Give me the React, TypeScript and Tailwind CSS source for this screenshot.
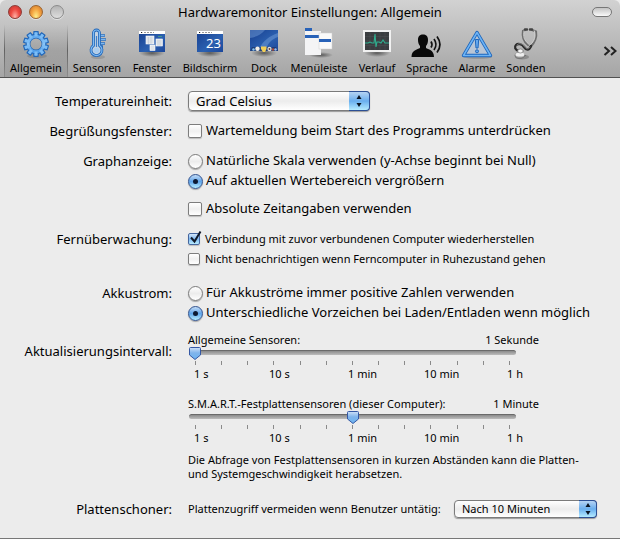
import { useId, useState, type ReactNode } from "react";

function GearIcon() {
  const teeth = Array.from({ length: 10 }, (_, i) => i * 36);
  return (
    <svg viewBox="0 0 32 32" className="size-8">
      <defs>
        <linearGradient id="gear" x1="0" y1="0" x2="0" y2="1">
          <stop offset="0" stopColor="#5aa5ee" />
          <stop offset="0.5" stopColor="#8cc6f8" />
          <stop offset="1" stopColor="#4a9bea" />
        </linearGradient>
      </defs>
      <ellipse cx="17" cy="28" rx="10" ry="2.5" fill="#000" opacity="0.12" />
      <g stroke="#2468b8" strokeWidth="1.2" fill="#6db2f2">
        {teeth.map((a) => (
          <path key={a} d="M13.400 8 L14 3.600 H18 L18.600 8 Z" transform={`rotate(${a} 16 16)`} />
        ))}
      </g>
      <circle cx="16" cy="16" r="7.8" fill="none" stroke="#2468b8" strokeWidth="4.4" />
      <circle cx="16" cy="16" r="7.8" fill="none" stroke="url(#gear)" strokeWidth="3" />
      <g fill="#7dbdf6">
        {teeth.map((a) => (
          <path key={a} d="M14.300 8.500 L14.800 4.400 H17.200 L17.700 8.500 Z" transform={`rotate(${a} 16 16)`} />
        ))}
      </g>
    </svg>
  );
}

function ThermometerIcon() {
  return (
    <svg viewBox="0 0 32 32" className="size-8">
      <ellipse cx="17" cy="29" rx="7" ry="2" fill="#000" opacity="0.12" />
      <path d="M19 7.500h5M19 11.500h6M19 15.500h5M19 18.500h3" stroke="#2a70c0" strokeWidth="2.400" />
      <path d="M19 7.500h4.500M19 11.500h5.500M19 15.500h4.500" stroke="#7db9f3" strokeWidth="1" />
      <path d="M12.500 17.500V5a3 3 0 0 1 6 0v12.500a5.500 5.500 0 1 1-6 0Z" fill="#c5d3e2" stroke="#1f64b6" strokeWidth="2.800" />
      <path d="M12.500 17.500V5a3 3 0 0 1 6 0v12.500a5.500 5.500 0 1 1-6 0Z" fill="none" stroke="#7dbbf5" strokeWidth="1.200" />
      <path d="M15.500 8v11" stroke="#3b7fca" strokeWidth="1.200" />
      <circle cx="15.500" cy="22.300" r="2.800" fill="#a9cdf0" />
    </svg>
  );
}

function Desktop({ children }: { children: ReactNode }) {
  return (
    <svg viewBox="0 0 32 32" className="size-8">
      <defs>
        <linearGradient id="desk" x1="0" y1="0" x2="1" y2="1">
          <stop offset="0" stopColor="#173f8f" />
          <stop offset="0.6" stopColor="#2b60b0" />
          <stop offset="1" stopColor="#1c479b" />
        </linearGradient>
        <radialGradient id="shade">
          <stop offset="0" stopColor="#000" stopOpacity="0.5" />
          <stop offset="1" stopColor="#000" stopOpacity="0" />
        </radialGradient>
      </defs>
      <ellipse cx="16" cy="25" rx="13" ry="4" fill="url(#shade)" />
      {children}
    </svg>
  );
}

function MenuBar() {
  return (
    <>
      <rect x="3" y="3" width="26" height="21" fill="url(#desk)" />
      <rect x="3" y="3" width="26" height="3" fill="#fff" />
      <path d="M5 4.500h1.200" stroke="#222" strokeWidth="1.200" />
      <path d="M8 4.500h10" stroke="#999" strokeDasharray="2 1" />
    </>
  );
}

function WindowsIcon() {
  return (
    <Desktop>
      <MenuBar />
      <g fill="#dfe4ea" stroke="#fff" strokeWidth="0.600">
        <rect x="10" y="8" width="8" height="8" />
        <rect x="20" y="11" width="6.500" height="7" />
        <rect x="14" y="17" width="5" height="5.500" />
      </g>
      <path d="M12.500 9v7M15 9v7M22 12v6M24 12v6" stroke="#c2c9d2" strokeWidth="0.600" />
      <path d="M22 8.500h4" stroke="#4cab7c" strokeWidth="0.800" />
    </Desktop>
  );
}

function ScreenIcon() {
  return (
    <Desktop>
      <MenuBar />
      <text x="12" y="20" fontSize="13" fill="#fff" className="font-['Noto_Sans',sans-serif]">23</text>
    </Desktop>
  );
}

function DockIcon() {
  return (
    <Desktop>
      <rect x="2" y="2" width="28" height="21" fill="url(#desk)" />
      <path d="M2 2h15c-4 5-9 7-15 8ZM30 5c-9 3-15 8-19 16h7c2-6 6-10 12-12Z" fill="#7ba5dc" opacity="0.450" />
      <path d="M2 23l2-4h24l2 4Z" fill="#1b2f5c" opacity="0.600" />
      <circle cx="5.500" cy="21.500" r="1.200" fill="#87c5f2" />
      <circle cx="9.500" cy="20.800" r="2.200" fill="#f3efe6" />
      <path d="M13 18.500h5.500v2.500l-1.500 3h-2L13 21Z" fill="#f3cf56" />
      <circle cx="21.500" cy="21" r="2.200" fill="#dddbd8" />
      <circle cx="21.500" cy="21" r="0.900" fill="#6b4632" />
      <circle cx="25" cy="21.500" r="1.200" fill="#b04b36" />
      <circle cx="27.500" cy="21.500" r="1.200" fill="#9dbde8" />
    </Desktop>
  );
}

function MenusIcon() {
  return (
    <svg viewBox="0 0 32 32" className="size-8">
      <ellipse cx="18" cy="27" rx="12" ry="3" fill="url(#shade)" />
      <rect x="2" y="0" width="7" height="3" fill="#2862b8" />
      <rect x="2" y="3" width="16" height="24" fill="#f4f4f5" />
      <rect x="2" y="7" width="15" height="3" fill="#2862b8" />
      <rect x="16" y="5" width="13" height="16" fill="#fafafa" stroke="#cfcfcf" strokeWidth="0.500" />
      <rect x="16" y="11" width="12" height="3" fill="#2862b8" />
    </svg>
  );
}

function HistoryIcon() {
  return (
    <Desktop>
      <rect x="2" y="2" width="28" height="22" fill="#f1f1f1" />
      <rect x="4" y="4" width="24" height="18" fill="#3a3d40" />
      <path d="M4 8.500h24M4 13h24M4 17.500h24M9 4v18M14 4v18M19 4v18M24 4v18" stroke="#4c5053" strokeWidth="0.500" />
      <path d="M4 15h3l2-1 2 1h2l1-9 1 13 1-5h2l2 1 2-3 2 3h4" fill="none" stroke="#2fae8e" strokeWidth="1.100" />
    </Desktop>
  );
}

function SpeechIcon() {
  return (
    <svg viewBox="0 0 32 32" className="size-8">
      <path d="M7 12c0-4 2-5.500 5-5.500s5 1.500 5 5.500c0 3-1 5-2 6v2c2 1.500 8 1.500 8 9H0.500c0-7 6-7.500 8.500-9v-2c-1-1-2-3-2-6Z" fill="#090909" />
      <g fill="none" stroke="#111" strokeWidth="1.700">
        <path d="M20 13.500c1.300 2 1.300 4 0 6" />
        <path d="M23 11c2.500 3.500 2.500 7.500 0 11" />
        <path d="M26 8.500c3.700 5 3.700 11 0 16" />
      </g>
    </svg>
  );
}

function AlertIcon() {
  return (
    <svg viewBox="0 0 32 32" className="size-8">
      <ellipse cx="17" cy="29" rx="14" ry="2" fill="#000" opacity="0.120" />
      <path d="M16 4.500 29.500 27.500h-27Z" fill="#b9c6d6" stroke="#1e66bb" strokeWidth="3.400" strokeLinejoin="round" />
      <path d="M16 4.500 29.500 27.500h-27Z" fill="none" stroke="#6eb4f5" strokeWidth="1.500" strokeLinejoin="round" />
      <path d="M14.300 11.500h3.400L17 20h-2Z" fill="#66aaf0" stroke="#1e66bb" />
      <circle cx="16" cy="23.300" r="1.500" fill="#66aaf0" stroke="#1e66bb" />
    </svg>
  );
}

function StethoscopeIcon() {
  return (
    <svg viewBox="0 0 32 32" className="size-8" fill="none" strokeLinecap="round">
      <ellipse cx="12" cy="29" rx="7" ry="2.500" fill="#000" opacity="0.200" />
      <path d="M15 2l-2 1c-1 6 0 10 5 14M22 2l4 1.500c1 6-1 11-6 16" stroke="#6e6e6e" strokeWidth="2.200" />
      <path d="M14 3c-1 6 0 9 4.500 13M24.500 3c1.500 6 0 10-4.500 14" stroke="#d8d8d8" strokeWidth="0.900" />
      <path d="M15 1.500h2M20 1.500h2" stroke="#444" strokeWidth="2.400" />
      <path d="M21 18c-2 5-5 4-7 1s-6-4-8-2-1 5 3 6" stroke="#2b2b2b" strokeWidth="2.400" />
      <path d="M20 19c-2 3-4 2-6-1s-6-3-7-1" stroke="#9a9a9a" strokeWidth="0.700" />
      <ellipse cx="10" cy="27.500" rx="5" ry="2.800" fill="#a5a5a5" stroke="#666" strokeWidth="0.800" />
      <ellipse cx="10" cy="26.500" rx="4.500" ry="2" fill="#eee" />
      <ellipse cx="10.500" cy="23" rx="2.800" ry="2" fill="#f5f5f5" stroke="#777" strokeWidth="0.700" />
    </svg>
  );
}

const tabs = [
  { name: "Allgemein", width: "w-16", icon: <GearIcon /> },
  { name: "Sensoren", width: "w-[58px]", icon: <ThermometerIcon /> },
  { name: "Fenster", width: "w-[52px]", icon: <WindowsIcon /> },
  { name: "Bildschirm", width: "w-16", icon: <ScreenIcon /> },
  { name: "Dock", width: "w-11", icon: <DockIcon /> },
  { name: "Menüleiste", width: "w-[66px]", icon: <MenusIcon /> },
  { name: "Verlauf", width: "w-[50px]", icon: <HistoryIcon /> },
  { name: "Sprache", width: "w-[50px]", icon: <SpeechIcon /> },
  { name: "Alarme", width: "w-[50px]", icon: <AlertIcon /> },
  { name: "Sonden", width: "w-12", icon: <StethoscopeIcon /> },
];

function Header() {
  const [active, setActive] = useState("Allgemein");
  const light = "size-[14px] rounded-full border shadow-[0_1px_0_rgba(255,255,255,0.5)]";
  return (
    <header className="rounded-t-md border-b border-[#515151] bg-linear-to-b from-[#d2d2d2] to-[#a5a5a5]">
      <div className="grid h-6 grid-cols-[1fr_auto_1fr] items-center px-2">
        <div className="flex gap-[7px]">
          <button aria-label="Schließen" className={`${light} border-[#8d3b36] bg-radial-[at_50%_90%] from-[#ffb3a8] via-[#ee4a42] to-[#b8322c]`} />
          <button aria-label="Minimieren" className={`${light} border-[#9a6430] bg-radial-[at_50%_90%] from-[#fff08c] via-[#f5a742] to-[#c96f28]`} />
          <button aria-label="Zoomen" className={`${light} border-[#8b8b8b] bg-linear-to-b from-[#b4b4b4] to-[#dedede]`} />
        </div>
        <h1 className="text-[13px] leading-5">Hardwaremonitor Einstellungen: Allgemein</h1>
        <button
          aria-label="Symbolleiste ein- oder ausblenden"
          className="h-[10px] w-5 justify-self-end rounded-full border border-[#777] bg-linear-to-b from-[#c4c4c4] to-[#fafafa]"
        />
      </div>
      <nav className="flex h-[53px] items-stretch pr-[3px] pl-1">
        {tabs.map((tab) => (
          <button
            key={tab.name}
            onClick={() => setActive(tab.name)}
            className={`${tab.width} relative flex shrink-0 flex-col items-center pt-1 text-[11px] leading-4 ${
              active === tab.name ? "bg-linear-to-b from-transparent via-black/10 to-black/5" : ""
            }`}
          >
            {active === tab.name && (
              <>
                <span className="absolute inset-y-0 left-0 w-px bg-linear-to-b from-transparent via-black/40 to-black/10" />
                <span className="absolute inset-y-0 right-0 w-px bg-linear-to-b from-transparent via-black/40 to-black/10" />
              </>
            )}
            {tab.icon}
            <span>{tab.name}</span>
          </button>
        ))}
        <button aria-label="Weitere Symbole" className="ml-auto self-center">
          <svg viewBox="0 0 14 12" className="h-3 w-[14px]" fill="none" stroke="#222" strokeWidth="2">
            <path d="M1.500 2 6 6 1.500 10M8 2l4.500 4L8 10" />
          </svg>
        </button>
      </nav>
    </header>
  );
}

function Row({ label, children }: { label: string; children: ReactNode }) {
  return (
    <div role="group" aria-label={label} className="grid grid-cols-[172px_1fr] gap-x-4">
      <div className="text-right text-[13px] leading-5 whitespace-nowrap">{label}</div>
      <div className="min-w-0">{children}</div>
    </div>
  );
}

function Select({ options, small, label }: { options: string[]; small?: boolean; label: string }) {
  return (
    <span className={`relative flex ${small ? "h-[18px] w-[143px]" : "h-5 w-[182px]"}`}>
      <select
        aria-label={label}
        className={`w-full appearance-none rounded-[4px] border border-[#7b7b7b] bg-linear-to-b from-white via-[#ececec] to-white pl-[7px] shadow-[0_1px_1px_rgba(0,0,0,0.35)] ${
          small ? "text-[11px] leading-4" : "text-[13px] leading-[18px]"
        }`}
      >
        {options.map((o) => (
          <option key={o}>{o}</option>
        ))}
      </select>
      <span
        className={`pointer-events-none absolute inset-y-0 right-0 flex items-center justify-center rounded-r-[4px] border border-l-0 border-[#2c4f94] bg-linear-to-b from-[#b5d3f3] via-[#69aeee] to-[#b4ebff] ${
          small ? "w-[18px]" : "w-[21px]"
        }`}
      >
        <svg viewBox="0 0 6 14" className="h-[14px] w-[6px]" fill="#0a1422">
          <path d="M3 1 5.500 5h-5ZM3 13 .5 9h5Z" />
        </svg>
      </span>
    </span>
  );
}

function Checkbox({ children, checked, small }: { children: string; checked?: boolean; small?: boolean }) {
  return (
    <label className={`flex h-5 items-center whitespace-nowrap ${small ? "gap-[5px] text-[11px]" : "gap-1 text-[13px]"}`}>
      <span className={`relative flex ${small ? "size-3" : "size-[14px]"}`}>
        <input
          type="checkbox"
          defaultChecked={checked}
          className="peer size-full appearance-none rounded-[2px] border border-[#7d7d7d] bg-linear-to-b from-white via-[#f0f0f0] to-white shadow-[0_1px_1px_rgba(0,0,0,0.2)] checked:border-[#45669f] checked:from-[#d4e6f9] checked:via-[#7db8f0] checked:to-[#b9ecff]"
        />
        <svg viewBox="0 0 14 14" className="pointer-events-none absolute bottom-px left-px hidden size-[14px] peer-checked:block" fill="none" stroke="#101828" strokeWidth="2">
          <path d="M2 7.500 5.500 11.500 11.500 1.500" />
        </svg>
      </span>
      {children}
    </label>
  );
}

function Radio({ children, checked, name }: { children: string; checked?: boolean; name: string }) {
  return (
    <label className="flex h-5 items-center gap-[3px] text-[13px] whitespace-nowrap">
      <span className="relative flex size-[15px]">
        <input
          type="radio"
          name={name}
          defaultChecked={checked}
          className="peer size-full appearance-none rounded-full border border-[#7b7b7b] bg-linear-to-b from-white via-[#ececec] to-white shadow-[0_1px_1px_rgba(0,0,0,0.3)] checked:border-[#31528f] checked:from-[#c3dcf6] checked:via-[#5fa5ea] checked:to-[#b6edff]"
        />
        <span className="pointer-events-none absolute inset-0 m-auto hidden size-[5px] rounded-full bg-[#0d1a33] peer-checked:block" />
      </span>
      {children}
    </label>
  );
}

const steps = Array.from({ length: 13 }, (_, i) => i);

function Slider({ title, reading, initial }: { title: string; reading: string; initial: number }) {
  const [value, setValue] = useState(initial);
  const id = useId();
  return (
    <div className="text-[11px] leading-[14px]">
      <div className="flex w-[351px] justify-between">
        <label htmlFor={id}>{title}</label>
        <output htmlFor={id}>{reading}</output>
      </div>
      <div className="ml-px w-[327px]">
        <div className="relative flex h-[14px] items-start pt-[3px]">
          <input
            id={id}
            type="range"
            min={0}
            max={12}
            value={value}
            onChange={(e) => setValue(Number(e.target.value))}
            className="h-[5px] w-full appearance-none rounded-full border-t border-[#6a6a6a] bg-linear-to-b from-[#8b8b8b] to-[#bdbdbd] [&::-webkit-slider-thumb]:h-[14px] [&::-webkit-slider-thumb]:w-3 [&::-webkit-slider-thumb]:appearance-none"
          />
          <div className="pointer-events-none absolute inset-x-[6px] top-0">
            <svg
              viewBox="0 0 12 14"
              className="absolute top-0 h-[14px] w-3 -translate-x-1/2"
              style={{ left: `${(value / 12) * 100}%` }}
            >
              <defs>
                <linearGradient id="thumb" x1="0" y1="0" x2="0" y2="1">
                  <stop offset="0" stopColor="#cfe1f7" />
                  <stop offset="0.450" stopColor="#7fb4ec" />
                  <stop offset="1" stopColor="#6cb4f0" />
                </linearGradient>
              </defs>
              <path d="M1.500.5h9q1 0 1 1v6.500L6 12.500.5 8V1.500q0-1 1-1Z" fill="url(#thumb)" stroke="#3558a4" />
            </svg>
          </div>
        </div>
        <div className="flex justify-between px-[6px]">
          {steps.map((s) => (
            <span key={s} className="h-1 w-px bg-[#8a8a8a]" />
          ))}
        </div>
      </div>
      <div className="grid grid-cols-[75px_79px_76px_83px_auto] pt-[2px] pl-[6px]">
        <span>1 s</span>
        <span>10 s</span>
        <span>1 min</span>
        <span>10 min</span>
        <span>1 h</span>
      </div>
    </div>
  );
}

export default function App() {
  return (
    <div className="flex min-h-screen flex-col border-b border-[#777] bg-[#ececec] font-['Noto_Sans',sans-serif] text-black">
      <Header />
      <main className="flex flex-col gap-[10px] pt-[13px]">
        <Row label="Temperatureinheit:">
          <Select label="Temperatureinheit" options={["Grad Celsius", "Grad Fahrenheit", "Kelvin"]} />
        </Row>
        <Row label="Begrüßungsfenster:">
          <Checkbox>Wartemeldung beim Start des Programms unterdrücken</Checkbox>
        </Row>
        <Row label="Graphanzeige:">
          <Radio name="graph">Natürliche Skala verwenden (y-Achse beginnt bei Null)</Radio>
          <Radio name="graph" checked>Auf aktuellen Wertebereich vergrößern</Radio>
          <div className="pt-2">
            <Checkbox>Absolute Zeitangaben verwenden</Checkbox>
          </div>
        </Row>
        <Row label="Fernüberwachung:">
          <Checkbox small checked>Verbindung mit zuvor verbundenen Computer wiederherstellen</Checkbox>
          <Checkbox small>Nicht benachrichtigen wenn Ferncomputer in Ruhezustand gehen</Checkbox>
        </Row>
        <div className="pt-1">
          <Row label="Akkustrom:">
            <Radio name="current">Für Akkuströme immer positive Zahlen verwenden</Radio>
            <Radio name="current" checked>Unterschiedliche Vorzeichen bei Laden/Entladen wenn möglich</Radio>
          </Row>
        </div>
        <div className="grid grid-cols-[172px_1fr] gap-x-4">
          <div className="pt-2 text-right text-[13px] leading-5 whitespace-nowrap">Aktualisierungsintervall:</div>
          <div className="flex flex-col gap-4">
            <Slider title="Allgemeine Sensoren:" reading="1 Sekunde" initial={0} />
            <Slider title="S.M.A.R.T.-Festplattensensoren (dieser Computer):" reading="1 Minute" initial={6} />
          </div>
          <p className="col-start-2 max-w-[408px] pt-2 text-[11px] leading-[14px]">
            Die Abfrage von Festplattensensoren in kurzen Abständen kann die Platten- und Systemgeschwindigkeit herabsetzen.
          </p>
        </div>
        <div className="pt-2">
          <Row label="Plattenschoner:">
            <label className="flex h-5 max-w-[409px] items-center justify-between text-[11px] whitespace-nowrap">
              Plattenzugriff vermeiden wenn Benutzer untätig:
              <Select small label="Plattenzugriff vermeiden wenn Benutzer untätig" options={["Nach 10 Minuten", "Nach 30 Minuten", "Nie"]} />
            </label>
          </Row>
        </div>
      </main>
    </div>
  );
}
